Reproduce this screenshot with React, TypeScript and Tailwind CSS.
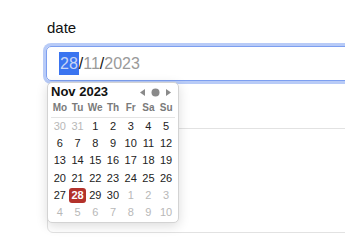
import React from "react";

const weeks: { d: number; muted?: boolean; sel?: boolean }[][] = [
  [{ d: 30, muted: true }, { d: 31, muted: true }, { d: 1 }, { d: 2 }, { d: 3 }, { d: 4 }, { d: 5 }],
  [{ d: 6 }, { d: 7 }, { d: 8 }, { d: 9 }, { d: 10 }, { d: 11 }, { d: 12 }],
  [{ d: 13 }, { d: 14 }, { d: 15 }, { d: 16 }, { d: 17 }, { d: 18 }, { d: 19 }],
  [{ d: 20 }, { d: 21 }, { d: 22 }, { d: 23 }, { d: 24 }, { d: 25 }, { d: 26 }],
  [{ d: 27 }, { d: 28, sel: true }, { d: 29 }, { d: 30 }, { d: 1, muted: true }, { d: 2, muted: true }, { d: 3, muted: true }],
  [{ d: 4, muted: true }, { d: 5, muted: true }, { d: 6, muted: true }, { d: 7, muted: true }, { d: 8, muted: true }, { d: 9, muted: true }, { d: 10, muted: true }],
];

const days = ["Mo", "Tu", "We", "Th", "Fr", "Sa", "Su"];

export default function App() {
  return (
    <div
      className="relative w-[345px] h-[243px] overflow-hidden bg-white pl-[46px] pt-[18px]"
      style={{ fontFamily: '"Liberation Sans", Arial, sans-serif' }}
    >
      <div className="text-[15px] leading-[20px] text-[#111] pl-[1px] mb-[8px]">date</div>
      <div className="w-[320px] h-[35px] rounded-[5px] border border-[#7d9ff0] ring-[3px] ring-[#b8cbf7] flex items-center pl-[12px] text-[16px]">
        <span className="bg-[#3a74f0] text-[#c9d6f5] leading-[23px] px-[1px]">28</span>
        <span className="text-[#111]">/</span>
        <span className="text-[#9a9a9a]">11</span>
        <span className="text-[#111]">/</span>
        <span className="text-[#9a9a9a]">2023</span>
      </div>
      <div className="ml-[1px] mt-[47px] w-[320px] h-[105px] rounded-[6px] border border-[#e2e2e2]" />

      <div className="absolute left-[47px] top-[82px] w-[132px] h-[141px] bg-white border border-[#d3d3d3] rounded-[5px] shadow-[0_3px_12px_rgba(0,0,0,0.14)] px-[2px]">
        <div className="h-[17px] flex items-center justify-between pl-[1px] pr-[4px]">
          <span className="text-[13px] font-bold text-[#111] leading-[17px]">Nov 2023</span>
          <svg width="32" height="9" viewBox="0 0 32 9" className="mt-[1px]">
            <polygon points="0,4.5 5,1 5,8" fill="#8a8a8a" />
            <circle cx="15.5" cy="4.5" r="4" fill="#8a8a8a" />
            <polygon points="26,1 31,4.5 26,8" fill="#8a8a8a" />
          </svg>
        </div>
        <div className="mx-[1px] grid grid-cols-7 h-[18px] items-center border-b border-[#e4e4e4] pb-[1px]">
          {days.map((d) => (
            <div key={d} className="text-center text-[10px] font-bold text-[#7a7a7a] leading-[16px]">
              {d}
            </div>
          ))}
        </div>
        <div className="mx-[1px]">
          {weeks.map((w, i) => (
            <div key={i} className="grid grid-cols-7 h-[17.2px]">
              {w.map((c, j) => (
                <div key={j} className="flex items-center justify-center">
                  {c.sel ? (
                    <span className="w-[17px] h-[15px] rounded-[3px] bg-[#b3322b] text-white font-bold text-[11px] leading-[15px] text-center">
                      {c.d}
                    </span>
                  ) : (
                    <span className={"text-[11px] leading-[15px] " + (c.muted ? "text-[#b8b8b8]" : "text-[#222]")}>
                      {c.d}
                    </span>
                  )}
                </div>
              ))}
            </div>
          ))}
        </div>
      </div>
    </div>
  );
}
